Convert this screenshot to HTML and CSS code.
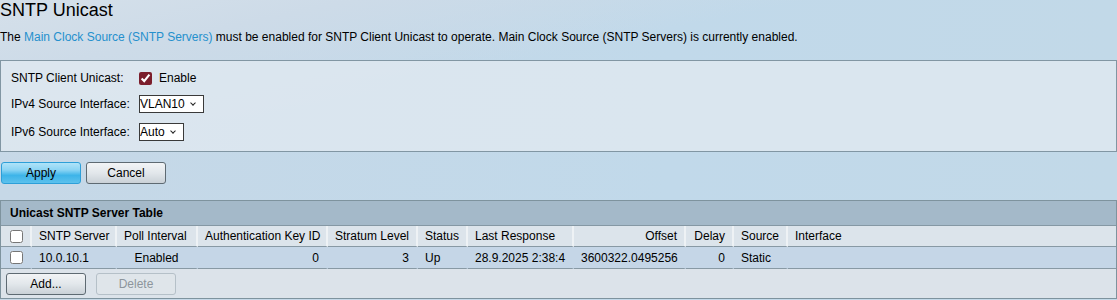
FILE: index.html
```html
<!DOCTYPE html>
<html lang="en">

<head>
    <meta charset="UTF-8">
    <meta name="viewport" content="width=device-width, initial-scale=1.0">
    <title>SNTP Unicast</title>
    <link rel="stylesheet" href="styles.css">
</head>

<body>
    <h1 class="page-title">SNTP Unicast</h1>
    <p class="note">The <a href="#">Main Clock Source (SNTP Servers)</a> must be enabled for SNTP Client Unicast to operate. Main Clock Source (SNTP Servers) is currently enabled.</p>

    <div class="panel">
        <div class="row row-1">
            <span class="lbl">SNTP Client Unicast:</span>
            <input type="checkbox" id="unicast" class="enable-box" checked>
            <label for="unicast" class="enable-text">Enable</label>
        </div>
        <div class="row row-2">
            <label for="ipv4" class="lbl">IPv4 Source Interface:</label>
            <span class="sel-wrap">
                <select id="ipv4" class="sel sel-vlan">
                    <option>VLAN10</option>
                </select>
            </span>
        </div>
        <div class="row row-3">
            <label for="ipv6" class="lbl">IPv6 Source Interface:</label>
            <span class="sel-wrap">
                <select id="ipv6" class="sel sel-auto">
                    <option>Auto</option>
                </select>
            </span>
        </div>
    </div>

    <div class="actions">
        <button class="btn btn-primary">Apply</button>
        <button class="btn">Cancel</button>
    </div>

    <div class="grid">
        <div class="grid-title">Unicast SNTP Server Table</div>
        <table class="grid-table">
            <thead>
                <tr>
                    <th class="c-chk"><input type="checkbox"></th>
                    <th class="c-server">SNTP Server</th>
                    <th class="c-poll">Poll Interval</th>
                    <th class="c-auth">Authentication Key ID</th>
                    <th class="c-stratum">Stratum Level</th>
                    <th class="c-status">Status</th>
                    <th class="c-last">Last Response</th>
                    <th class="c-offset num">Offset</th>
                    <th class="c-delay num">Delay</th>
                    <th class="c-source">Source</th>
                    <th class="c-iface">Interface</th>
                </tr>
            </thead>
            <tbody>
                <tr>
                    <td class="c-chk"><input type="checkbox"></td>
                    <td>10.0.10.1</td>
                    <td class="mid">Enabled</td>
                    <td class="num">0</td>
                    <td class="num">3</td>
                    <td>Up</td>
                    <td>28.9.2025 2:38:4</td>
                    <td class="num">3600322.0495256</td>
                    <td class="num">0</td>
                    <td>Static</td>
                    <td></td>
                </tr>
            </tbody>
        </table>
        <div class="grid-foot">
            <button class="btn">Add...</button>
            <button class="btn" disabled>Delete</button>
        </div>
    </div>
</body>

</html>
```

FILE: styles.css
```css
html {
    background-color: #c4d6e6;
}

body {
    margin: 0;
    padding: 0;
    min-height: 300px;
    font-family: "Liberation Sans", Arial, sans-serif;
    font-size: 12px;
    color: #000;
    background-color: #c4d6e6;
    background-image:
        linear-gradient(168deg, #d5e0ea 0%, #cddbe8 14%, rgba(197, 215, 230, 0) 32%),
        linear-gradient(to right, #c6d8e7 0%, #c1d9ea 60%, #c2d9e8 100%);
}

.page-title {
    margin: 0;
    font-size: 18px;
    font-weight: normal;
}

.note {
    margin: 9px 0 16px;
}

.note a {
    color: #2590cd;
    text-decoration: none;
}

/* settings panel */
.panel {
    box-sizing: border-box;
    width: 100%;
    padding: 5px 10px;
    background-color: rgba(224, 232, 240, 0.8);
    border: 1px solid #8196a3;
}

.row {
    display: flex;
    align-items: center;
}

.row-1 {
    height: 24px;
}

.row-2 {
    height: 27px;
}

.row-3 {
    height: 29px;
}

.lbl {
    width: 128px;
}

.enable-box {
    width: 13px;
    height: 13px;
    margin: 0 7px 0 0;
    accent-color: #7b1e2c;
}

.sel-wrap {
    position: relative;
    display: inline-block;
    height: 18px;
}

.sel-wrap::after {
    content: "";
    position: absolute;
    right: 9px;
    top: 6px;
    width: 3px;
    height: 3px;
    border-right: 1px solid #222;
    border-bottom: 1px solid #222;
    transform: rotate(45deg);
    pointer-events: none;
}

.sel {
    display: block;
    box-sizing: border-box;
    height: 18px;
    margin: 0;
    padding: 0;
    font-family: "Liberation Sans", Arial, sans-serif;
    font-size: 12px;
    color: #000;
    background-color: #fff;
    border: 1px solid #3a3a3a;
    border-radius: 0;
    appearance: none;
    -webkit-appearance: none;
}

.sel-vlan {
    width: 65px;
}

.sel-auto {
    width: 45px;
}

/* buttons */
.actions {
    display: flex;
    gap: 5px;
    margin: 10px 0 16px 1px;
}

.btn {
    width: 80px;
    height: 22px;
    padding: 0;
    font-family: "Liberation Sans", Arial, sans-serif;
    font-size: 12px;
    color: #000;
    border: 1px solid #5e6a72;
    border-radius: 3px;
    background: linear-gradient(#f2f4f6 0%, #e2e7eb 50%, #cad1d7 100%);
}

.btn-primary {
    border-color: #2d9fd8;
    background: linear-gradient(#b0e3f8 0%, #8ad4f4 35%, #3db4e9 62%, #5cc1ed 100%);
}

.btn:disabled {
    color: #8d959c;
    border-color: #b5c0c8;
    background: #dfe5ea;
}

/* server table */
.grid {
    border: 1px solid #7e939e;
    box-sizing: border-box;
    width: 100%;
}

.grid-title {
    height: 24px;
    line-height: 24px;
    padding-left: 9px;
    font-weight: bold;
    background-color: #a4b9c9;
    border-bottom: 1px solid #8598a4;
}

.grid-table {
    width: 100%;
    table-layout: fixed;
    border-collapse: separate;
    border-spacing: 0;
}

.grid-table th,
.grid-table td {
    box-sizing: border-box;
    padding: 0 7px;
    text-align: left;
    font-weight: normal;
    white-space: nowrap;
    overflow: hidden;
}

.grid-table th {
    height: 21px;
    background-color: #dce4eb;
    border-right: 2px solid #eef2f5;
    border-bottom: 1px solid #8899a4;
}

.grid-table td {
    height: 22px;
    background-color: #c5d6e7;
    border-right: 2px solid #c5d6e7;
    border-bottom: 1px solid #8899a4;
}

.grid-table th:last-child,
.grid-table td:last-child {
    border-right: none;
}

.grid-table .num {
    text-align: right;
}

.grid-table .mid {
    text-align: center;
}

.grid-table .c-chk {
    padding: 0 0 0 9px;
}

.grid-table input[type="checkbox"] {
    display: block;
    width: 13px;
    height: 13px;
    margin: 0;
}

.c-chk { width: 31px; }
.c-server { width: 85px; }
.c-poll { width: 81px; }
.c-auth { width: 130px; }
.c-stratum { width: 90px; }
.c-status { width: 50px; }
.c-last { width: 106px; }
.c-offset { width: 112px; }
.c-delay { width: 48px; }
.c-source { width: 54px; }

.grid-foot {
    display: flex;
    gap: 10px;
    padding: 4px 5px 3px;
    background-color: #dce3ea;
}
```
